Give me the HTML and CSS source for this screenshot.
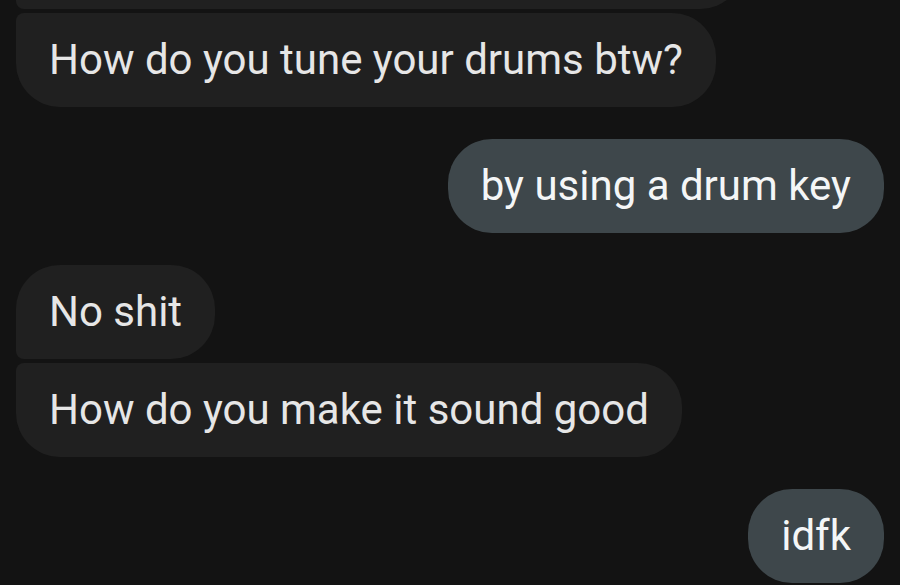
FILE: index.html
```html
<!DOCTYPE html>
<html lang="en">
<head>
<meta charset="utf-8">
<title>Chat</title>
<link rel="stylesheet" href="styles.css">
</head>
<body>
<div class="thread">
  <div class="row in"><div class="bubble in mid-top prev" aria-hidden="true"></div></div>
  <div class="row in gap-s"><div class="bubble in last">How do you tune your drums btw?</div></div>
  <div class="row out gap-l"><div class="bubble out">by using a drum key</div></div>
  <div class="row in gap-l"><div class="bubble in first">No shit</div></div>
  <div class="row in gap-s"><div class="bubble in last">How do you make it sound good</div></div>
  <div class="row out gap-l"><div class="bubble out">idfk</div></div>
</div>
</body>
</html>
```
FILE: styles.css
```css
html, body {
  margin: 0;
  padding: 0;
  background: #131313;
  height: 100%;
  overflow: hidden;
}
.thread {
  display: flex;
  flex-direction: column;
  padding: 0 16px;
  margin-top: -85px;
}
.row {
  display: flex;
}
.row.out {
  justify-content: flex-end;
}
.gap-s { margin-top: 4px; }
.gap-l { margin-top: 32px; }
.bubble {
  font-family: Roboto, "Noto Sans", sans-serif;
  font-size: 42px;
  line-height: 94px;
  height: 94px;
  padding: 0 33px;
  border-radius: 44px;
  white-space: nowrap;
  box-sizing: border-box;
}
.bubble.in {
  background: #202020;
  color: #e6e6e6;
}
.bubble.out {
  background: #3e474b;
  color: #f4f6f7;
}
.bubble.prev {
  width: 728px;
}
.bubble.mid-top {
  border-radius: 8px 44px 44px 8px;
}
.bubble.last {
  border-top-left-radius: 8px;
}
.bubble.first {
  border-bottom-left-radius: 8px;
}
```
